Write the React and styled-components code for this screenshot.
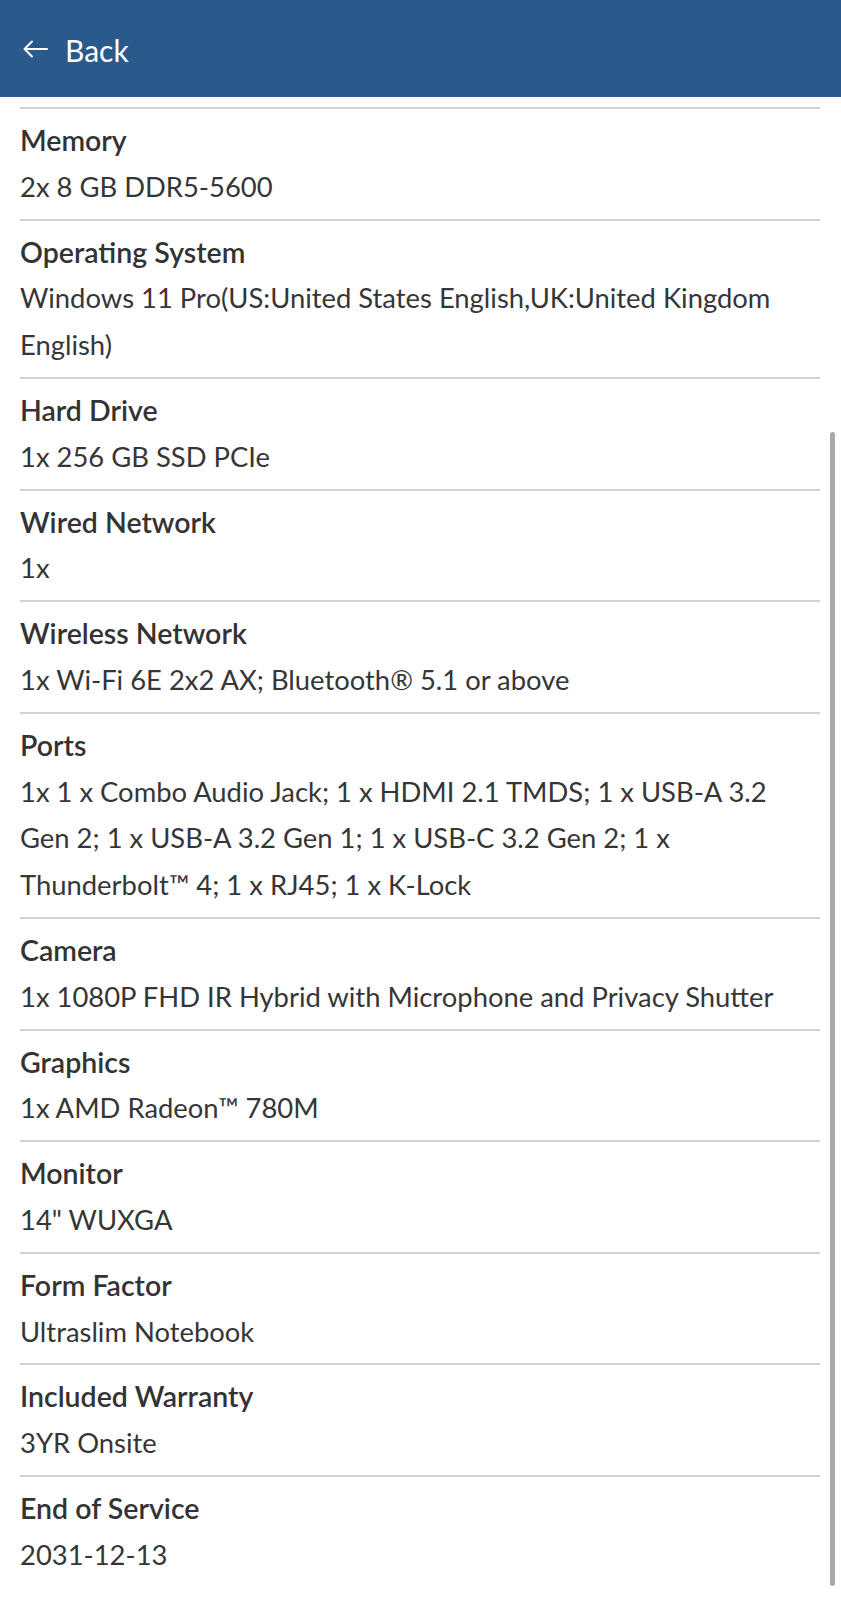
import React from "react";
import styled, { createGlobalStyle } from "styled-components";

const GlobalStyle = createGlobalStyle`
  html, body {
    margin: 0;
    padding: 0;
    background: #ffffff;
  }
  body {
    font-family: Lato, "Open Sans", "Liberation Sans", sans-serif;
    -webkit-font-smoothing: antialiased;
  }
`;

const specs = [
  { label: "Memory", value: "2x 8 GB DDR5-5600" },
  {
    label: "Operating System",
    value: "Windows 11 Pro(US:United States English,UK:United Kingdom English)",
  },
  { label: "Hard Drive", value: "1x 256 GB SSD PCIe" },
  { label: "Wired Network", value: "1x" },
  { label: "Wireless Network", value: "1x Wi-Fi 6E 2x2 AX; Bluetooth® 5.1 or above" },
  {
    label: "Ports",
    value:
      "1x 1 x Combo Audio Jack; 1 x HDMI 2.1 TMDS; 1 x USB-A 3.2 Gen 2; 1 x USB-A 3.2 Gen 1; 1 x USB-C 3.2 Gen 2; 1 x Thunderbolt™ 4; 1 x RJ45; 1 x K-Lock",
  },
  { label: "Camera", value: "1x 1080P FHD IR Hybrid with Microphone and Privacy Shutter" },
  { label: "Graphics", value: "1x AMD Radeon™ 780M" },
  { label: "Monitor", value: '14" WUXGA' },
  { label: "Form Factor", value: "Ultraslim Notebook" },
  { label: "Included Warranty", value: "3YR Onsite" },
  { label: "End of Service", value: "2031-12-13" },
];

const Screen = styled.div`
  position: relative;
  width: 841px;
  height: 1600px;
  overflow: hidden;
  background: #ffffff;
`;

const TopBar = styled.header`
  display: flex;
  align-items: center;
  gap: 17px;
  height: 97px;
  padding: 0 22px 0 23px;
  box-sizing: border-box;
  background: #2a5a8b;
  color: #ffffff;
`;

const BackLabel = styled.span`
  font-size: 30px;
  font-weight: 400;
  line-height: 1;
  padding-top: 2px;
`;

const SpecList = styled.dl`
  margin: 0;
  padding: 10px 21px 0 20px;
`;

const SpecRow = styled.div`
  border-top: 2px solid #d2d2d2;
  padding: 8px 0;
`;

const SpecLabel = styled.dt`
  margin: 0;
  font-size: 28.5px;
  font-weight: 600;
  line-height: 46.8px;
  color: #333333;
`;

const SpecValue = styled.dd`
  margin: 0;
  font-size: 27.4px;
  font-weight: 400;
  line-height: 46.8px;
  color: #363636;
`;

const ScrollThumb = styled.div`
  position: absolute;
  right: 6px;
  top: 432px;
  width: 5px;
  height: 1154px;
  border-radius: 3px;
  background: #a9a9a9;
`;

function BackArrow() {
  return (
    <svg width="25" height="18" viewBox="0 0 25 18" fill="none" aria-hidden="true">
      <path
        d="M24 9H1.5M9 1.5L1.5 9L9 16.5"
        stroke="#ffffff"
        strokeWidth="2"
        strokeLinecap="round"
        strokeLinejoin="round"
      />
    </svg>
  );
}

export default function App() {
  return (
    <Screen>
      <GlobalStyle />
      <TopBar>
        <BackArrow />
        <BackLabel>Back</BackLabel>
      </TopBar>
      <SpecList>
        {specs.map((s) => (
          <SpecRow key={s.label}>
            <SpecLabel>{s.label}</SpecLabel>
            <SpecValue>{s.value}</SpecValue>
          </SpecRow>
        ))}
      </SpecList>
      <ScrollThumb />
    </Screen>
  );
}
